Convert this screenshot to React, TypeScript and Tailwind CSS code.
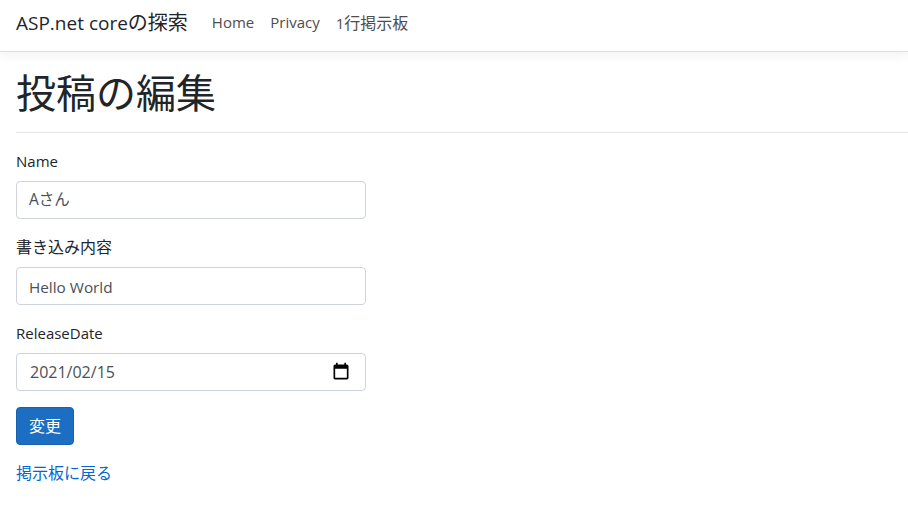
import React from 'react';

const FONT = "font-['Open_Sans','Noto_Sans_CJK_JP',sans-serif]";

const fieldClass =
  'block w-[350px] h-[38px] rounded-[4px] border border-[#ced4da] bg-white text-[#495057] outline-none';

interface FieldProps {
  label: string;
  value: string;
  inputClass: string;
  labelClass?: string;
  date?: boolean;
}

const Field: React.FC<FieldProps> = ({ label, value, inputClass, labelClass = 'text-[15px]', date }) => (
  <div className="mb-[16px]">
    <label className={`block h-[24px] mb-[8px] leading-[24px] text-[#212529] ${labelClass}`}>{label}</label>
    <div className="relative w-[350px]">
      <input type="text" readOnly defaultValue={value} className={`${fieldClass} ${inputClass}`} />
      {date && (
        <svg className="absolute right-[15px] top-[9px] h-[20px] w-[20px]" viewBox="0 0 24 24" fill="#000">
          <path d="M19 3h-1V1h-2v2H8V1H6v2H5c-1.1 0-2 .9-2 2v14c0 1.1.9 2 2 2h14c1.1 0 2-.9 2-2V5c0-1.1-.9-2-2-2zm0 16H5V8h14v11z" />
        </svg>
      )}
    </div>
  </div>
);

export default function App() {
  return (
    <div className={`${FONT} min-h-[517px] bg-white text-[#212529]`}>
      <nav className="flex h-[52px] items-center border-b border-[#dfdfdf] bg-white px-[16px] pb-[5px] shadow-[0_4px_10px_rgba(0,0,0,0.05)]">
        <a className="mr-[16px] text-[19px] leading-[30px] text-[#212529]">
          ASP.net core<span className="text-[20px]">の探索</span>
        </a>
        <ul className="flex text-[15px] text-[#4d4d4d]">
          <li className="px-[8px]">Home</li>
          <li className="px-[8px]">Privacy</li>
          <li className="px-[8px]">
            1<span className="text-[16px]">行掲示板</span>
          </li>
        </ul>
      </nav>
      <main className="pl-[16px]">
        <h1 className="mt-[13px] h-[56px] text-[40px] leading-[56px] font-normal">投稿の編集</h1>
        <hr className="mt-[11px] mb-[16px] border-t border-[#e5e5e5]" />
        <form>
          <Field label="Name" value="Aさん" inputClass="pl-[12px] pb-[3px] text-[15.5px]" />
          <Field
            label="書き込み内容"
            labelClass="text-[16px]"
            value="Hello World"
            inputClass="pl-[12px] pt-[1px] text-[15.3px]"
          />
          <Field label="ReleaseDate" value="2021/02/15" inputClass="pl-[13px] text-[16px]" date />
          <button
            type="button"
            className="block h-[38px] w-[58px] rounded-[4px] border border-[#1861ac] bg-[#1b6ec2] text-[16px] text-white"
          >
            変更
          </button>
        </form>
        <a className="mt-[16px] block text-[16px] leading-[24px] text-[#0366d6]">掲示板に戻る</a>
      </main>
    </div>
  );
}
